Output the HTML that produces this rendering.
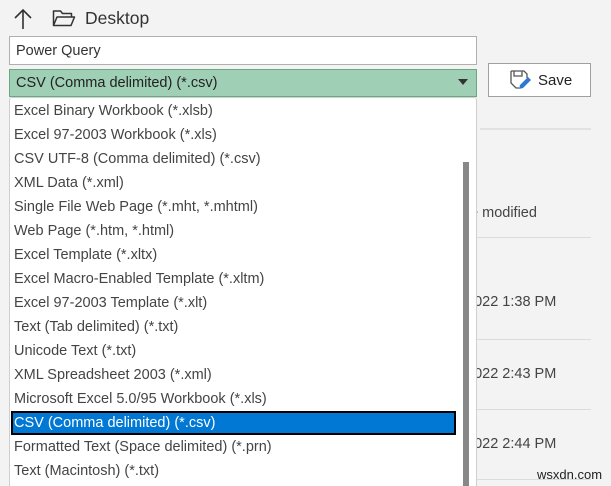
<!DOCTYPE html>
<html><head><meta charset="utf-8">
<style>
*{margin:0;padding:0;box-sizing:border-box}
html,body{width:611px;height:486px;overflow:hidden}
body{background:#f3f3f3;font-family:"Liberation Sans",sans-serif;position:relative;color:#333}
.a{position:absolute}
.item{position:absolute;left:4px;height:24px;line-height:24px;font-size:14.5px;color:#444;white-space:nowrap}
.line{position:absolute;height:1px;background:#dcdcdc;left:477px;width:114px}
.date{position:absolute;font-size:14.5px;color:#444;white-space:nowrap}
</style></head><body>
<svg class="a" style="left:13px;top:7px" width="20" height="24" viewBox="0 0 20 24"><path d="M10 22V3M2 11l8-8 8 8" stroke="#333" stroke-width="1.6" fill="none"/></svg>
<svg class="a" style="left:52px;top:9px" width="24" height="18" viewBox="0 0 24 18"><path d="M1.5 16.5V2h7l2 2.5h9V8M1.5 16.5L5 8h17.5l-3.5 8.5z" stroke="#333" stroke-width="1.5" fill="none" stroke-linejoin="round"/></svg>
<div class="a" style="left:85px;top:8px;font-size:17.5px;color:#333">Desktop</div>
<div class="a" style="left:9px;top:36px;width:468px;height:29px;background:#fff;border:1px solid #b0b0b0;font-size:14.5px;line-height:29px;padding-left:6px;color:#333">Power Query</div>
<div class="a" style="left:9px;top:69px;width:468px;height:28px;background:#9fcfb5;border:1px solid #6aa884;font-size:14.5px;line-height:26px;padding-left:6px;color:#222">CSV (Comma delimited) (*.csv)</div>
<svg class="a" style="left:458px;top:79px" width="10" height="6"><path d="M0 0h10L5 6z" fill="#333"/></svg>
<div class="a" style="left:488px;top:63px;width:103px;height:34px;background:#fff;border:1px solid #a0a0a0"></div>
<svg class="a" style="left:510px;top:70px" width="22" height="21" viewBox="0 0 22 21"><path d="M1 1h13l3 3v4M1 1v12l5 5h3M4 1v5h8V1" stroke="#555" stroke-width="1.3" fill="none"/><path d="M9 19l1-4 8-8 3 3-8 8z" fill="#2a7bd0"/></svg>
<div class="a" style="left:538px;top:72px;font-size:15px;color:#222">Save</div>
<div class="a" style="left:480px;top:128px;width:111px;height:2px;background:#e2e2e2"></div>
<div class="date" style="left:466px;top:205px">te modified</div>
<div class="line" style="top:237px"></div>
<div class="date" style="left:466px;top:294px">2022 1:38 PM</div>
<div class="line" style="top:339px"></div>
<div class="date" style="left:466px;top:366px">2022 2:43 PM</div>
<div class="line" style="top:409px"></div>
<div class="date" style="left:466px;top:436px">2022 2:44 PM</div>
<div class="line" style="top:479px"></div>
<div class="a" style="left:537px;top:467px;font-size:13px;color:#222">wsxdn.com</div>
<div class="a" style="left:9px;top:97px;width:468px;height:389px;overflow:hidden;background:#fff;border:1px solid #cfcfcf;border-bottom:none;border-radius:3px 3px 0 0">
<div class="item" style="top:1px">Excel Binary Workbook (*.xlsb)</div>
<div class="item" style="top:25px">Excel 97-2003 Workbook (*.xls)</div>
<div class="item" style="top:49px">CSV UTF-8 (Comma delimited) (*.csv)</div>
<div class="item" style="top:73px">XML Data (*.xml)</div>
<div class="item" style="top:97px">Single File Web Page (*.mht, *.mhtml)</div>
<div class="item" style="top:121px">Web Page (*.htm, *.html)</div>
<div class="item" style="top:145px">Excel Template (*.xltx)</div>
<div class="item" style="top:169px">Excel Macro-Enabled Template (*.xltm)</div>
<div class="item" style="top:193px">Excel 97-2003 Template (*.xlt)</div>
<div class="item" style="top:217px">Text (Tab delimited) (*.txt)</div>
<div class="item" style="top:241px">Unicode Text (*.txt)</div>
<div class="item" style="top:265px">XML Spreadsheet 2003 (*.xml)</div>
<div class="item" style="top:289px">Microsoft Excel 5.0/95 Workbook (*.xls)</div>
<div class="a" style="left:1px;top:313px;width:445px;height:24px;background:#0078d4;border:2px solid #000"></div>
<div class="item" style="top:313px;color:#fff">CSV (Comma delimited) (*.csv)</div>
<div class="item" style="top:337px">Formatted Text (Space delimited) (*.prn)</div>
<div class="item" style="top:361px">Text (Macintosh) (*.txt)</div>
<div class="a" style="left:453px;top:64px;width:6px;height:340px;background:#888"></div>
</div>
</body></html>
